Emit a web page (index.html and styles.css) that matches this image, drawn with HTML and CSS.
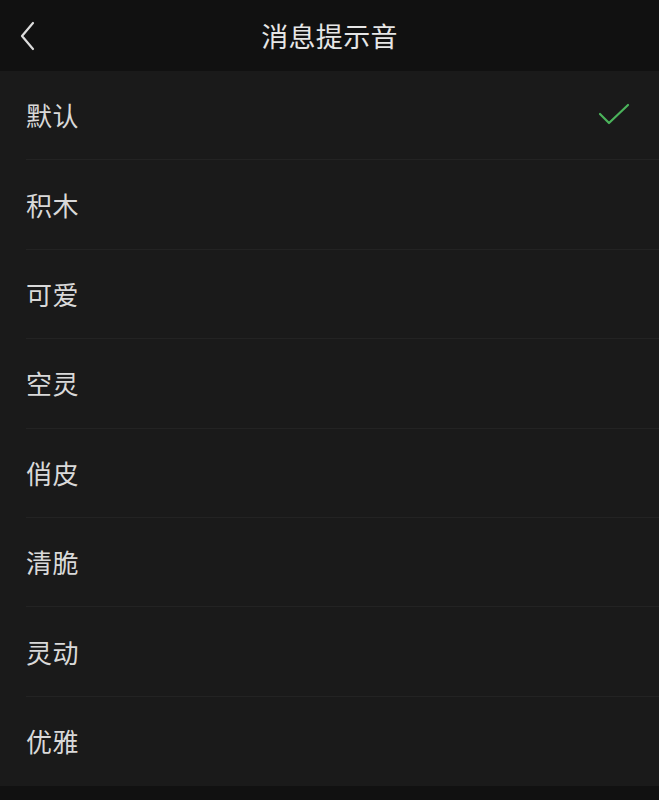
FILE: index.html
```html
<!DOCTYPE html>
<html lang="zh-CN">
<head>
<meta charset="utf-8">
<title>消息提示音</title>
<link rel="stylesheet" href="styles.css">
</head>
<body>
<div class="page">
  <header class="topbar">
    <div class="back">
      <svg width="16" height="30" viewBox="0 0 16 30"><polyline points="13,2 2,15 13,28" fill="none" stroke="#dcdcdc" stroke-width="2.2" stroke-linecap="round" stroke-linejoin="round"/></svg>
    </div>
    <h1 class="title">消息提示音</h1>
  </header>
  <ul class="list">
    <li class="row"><div class="inner"><span class="label">默认</span>
      <svg class="check" width="34" height="26" viewBox="0 0 34 26"><polyline points="3,12 12,21 31,3" fill="none" stroke="#4bb35b" stroke-width="2.2" stroke-linecap="round" stroke-linejoin="round"/></svg>
    </div></li>
    <li class="row"><div class="inner"><span class="label">积木</span></div></li>
    <li class="row"><div class="inner"><span class="label">可爱</span></div></li>
    <li class="row"><div class="inner"><span class="label">空灵</span></div></li>
    <li class="row"><div class="inner"><span class="label">俏皮</span></div></li>
    <li class="row"><div class="inner"><span class="label">清脆</span></div></li>
    <li class="row"><div class="inner"><span class="label">灵动</span></div></li>
    <li class="row last"><div class="inner"><span class="label">优雅</span></div></li>
  </ul>
</div>
</body>
</html>
```
FILE: styles.css
```css
html, body {
  margin: 0;
  padding: 0;
  background: #111111;
}
body {
  font-family: "Noto Sans CJK SC", "Noto Sans", sans-serif;
  color: #d9d9d9;
}
.page {
  width: 659px;
  height: 800px;
  overflow: hidden;
}
.topbar {
  height: 71px;
  background: #111111;
  position: relative;
  display: flex;
  align-items: center;
  justify-content: center;
}
.back {
  position: absolute;
  left: 20px;
  top: 21px;
  width: 16px;
  height: 30px;
}
.back svg { display: block; }
.title {
  margin: 0;
  font-size: 27px;
  font-weight: 400;
  color: #e6e6e6;
  letter-spacing: 0.3px;
  line-height: 1;
}
.list {
  list-style: none;
  margin: 0;
  padding: 0;
  background: #1a1a1a;
}
.row {
  height: 89.4px;
  padding-left: 26px;
  box-sizing: border-box;
}
.inner {
  height: 100%;
  box-sizing: border-box;
  border-bottom: 1px solid #232323;
  display: flex;
  align-items: center;
  justify-content: space-between;
  padding-right: 28px;
}
.row.last .inner {
  border-bottom: none;
}
.label {
  font-size: 26px;
  line-height: 1;
  color: #d9d9d9;
  letter-spacing: 0.5px;
}
.check { display: block; }
```
